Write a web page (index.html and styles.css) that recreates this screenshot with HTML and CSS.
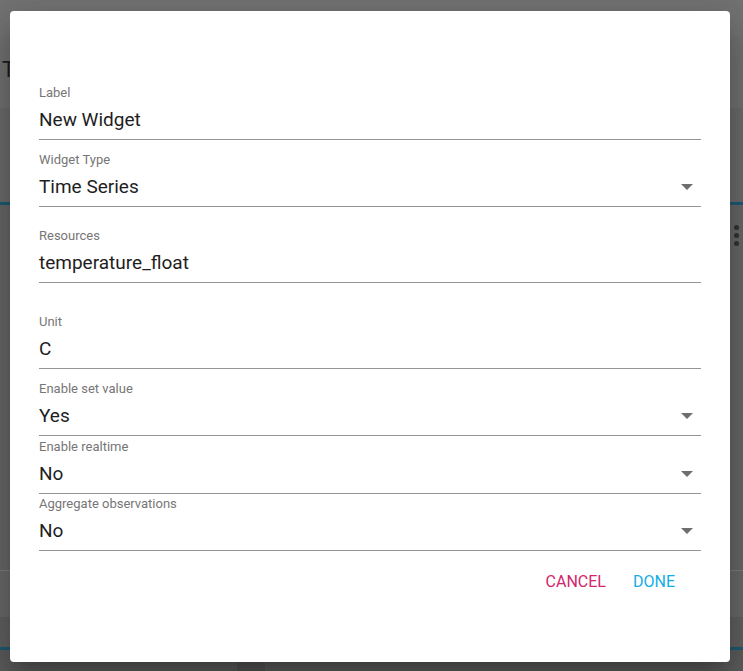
FILE: index.html
```html
<!DOCTYPE html>
<html lang="en">
<head>
<meta charset="utf-8">
<title>New Widget</title>
<link rel="stylesheet" href="styles.css">
</head>
<body>
<div class="page">
  <div class="bar-top"></div>
  <div class="bar-title"><span class="title-t">T</span></div>
  <div class="band-a"></div>
  <div class="rule-blue"></div>
  <div class="band-b">
    <div class="dots"><span></span><span></span><span></span></div>
  </div>
  <div class="rule-light"></div>
  <div class="band-c"></div>
  <div class="band-d"></div>
  <div class="rule-blue"></div>
  <div class="band-e"><div class="stub"></div></div>
</div>

<div class="dialog">
  <div class="field">
    <div class="label">Label</div>
    <div class="value-row"><span class="value">New Widget</span></div>
  </div>
  <div class="field gap-13">
    <div class="label">Widget Type</div>
    <div class="value-row"><span class="value">Time Series</span><span class="arrow"></span></div>
  </div>
  <div class="field gap-22">
    <div class="label">Resources</div>
    <div class="value-row"><span class="value">temperature_float</span></div>
  </div>
  <div class="field gap-32">
    <div class="label">Unit</div>
    <div class="value-row"><span class="value">C</span></div>
  </div>
  <div class="field gap-13">
    <div class="label">Enable set value</div>
    <div class="value-row"><span class="value">Yes</span><span class="arrow"></span></div>
  </div>
  <div class="field gap-4">
    <div class="label">Enable realtime</div>
    <div class="value-row"><span class="value">No</span><span class="arrow"></span></div>
  </div>
  <div class="field gap-3">
    <div class="label">Aggregate observations</div>
    <div class="value-row"><span class="value">No</span><span class="arrow"></span></div>
  </div>
  <div class="actions">
    <button class="btn btn-cancel" type="button">Cancel</button>
    <button class="btn btn-done" type="button">Done</button>
  </div>
</div>
</body>
</html>
```

FILE: styles.css
```css
* { box-sizing: border-box; }

html, body {
  margin: 0;
  padding: 0;
  width: 743px;
  height: 671px;
  overflow: hidden;
  font-family: Roboto, "Noto Sans", Arial, sans-serif;
  background: #5c5c5c;
}

.page {
  width: 743px;
  height: 671px;
  display: flex;
  flex-direction: column;
}

.bar-top { height: 37px; background: #737373; }
.bar-title {
  height: 71px;
  background: #717171;
  padding: 22px 0 0 2px;
}
.title-t {
  display: block;
  font-size: 22px;
  line-height: 22px;
  color: #1c1c1c;
}
.band-a { height: 94px; background: #6b6b6b; }
.rule-blue { height: 3px; background: #1d5a74; }
.band-b {
  height: 365px;
  background: #676767;
  display: flex;
  justify-content: flex-end;
  padding: 20px 4px 0 0;
}
.dots {
  display: flex;
  flex-direction: column;
  gap: 3px;
}
.dots span {
  width: 5px;
  height: 5px;
  border-radius: 50%;
  background: #333;
}
.rule-light { height: 1px; background: #7c7c7c; }
.band-c { height: 46px; background: #696969; }
.band-d { height: 30px; background: #606060; }
.band-e {
  flex: 1;
  background: #5c5c5c;
  display: flex;
  padding: 11px 0 0 237px;
}
.stub { width: 28px; background: #545454; }

.dialog {
  position: absolute;
  left: 10px;
  top: 11px;
  width: 720px;
  height: 651px;
  background: #fff;
  border-radius: 4px;
  padding: 75px 29px 0;
  box-shadow: 0 11px 15px -7px rgba(0,0,0,.2), 0 24px 38px 3px rgba(0,0,0,.14), 0 9px 46px 8px rgba(0,0,0,.12);
}

.field { display: flex; flex-direction: column; }
.gap-3 { margin-top: 3px; }
.gap-4 { margin-top: 4px; }
.gap-13 { margin-top: 13px; }
.gap-22 { margin-top: 22px; }
.gap-32 { margin-top: 32px; }

.label {
  font-size: 13px;
  line-height: 14px;
  color: #767676;
}

.value-row {
  margin-top: 8px;
  display: flex;
  align-items: center;
  justify-content: space-between;
  padding-bottom: 7px;
  border-bottom: 1px solid #949494;
}

.value {
  font-size: 19px;
  line-height: 24px;
  color: #1e1e1e;
}

.arrow {
  width: 0;
  height: 0;
  border-left: 6px solid transparent;
  border-right: 6px solid transparent;
  border-top: 6px solid #6e6e6e;
  margin-right: 8px;
}

.actions {
  display: flex;
  justify-content: flex-end;
  gap: 3px;
  margin-top: 13px;
  margin-right: 14px;
}

.btn {
  font-family: inherit;
  font-size: 16px;
  line-height: 20px;
  text-transform: uppercase;
  background: none;
  border: 0;
  padding: 8px 12px;
  cursor: pointer;
}
.btn-cancel { color: #d3246c; }
.btn-done { color: #12ade6; }
```
